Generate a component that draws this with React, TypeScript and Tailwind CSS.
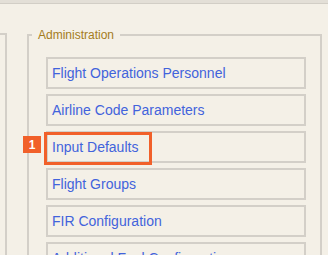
const ITEMS = [
  'Flight Operations Personnel',
  'Airline Code Parameters',
  'Input Defaults',
  'Flight Groups',
  'FIR Configuration',
  'Additional Fuel Configuration',
];

export default function App() {
  return <div className="h-[255px] w-[328px] overflow-hidden bg-[#f4f0e7] font-['Liberation_Sans',Arial,sans-serif]">
    <div className="h-[4px] border-b border-[#d2cec6] bg-[#e3dfd7]" />
    <div className="mt-[22px] flex items-start">
      <div className="mt-[7px] h-[240px] w-[7px] border-r-2 border-t-2 border-[#d3cfc8]" />
      <fieldset className="ml-[20px] w-[295px] border-2 border-[#d3cfc8] pb-4 pl-[17px] pr-[14px] pt-[13px]">
        <legend className="-ml-[14px] px-[6px] text-[12px] text-[#a47c1c]">Administration</legend>
        <ul className="flex flex-col gap-[5px]">
          {ITEMS.map((item, index) => <li key={item} className="relative flex h-[32px] items-center border-2 border-[#d3cfc8] pl-[4px] text-[14px] text-[#4263dc]">
            {item}
            {index === 2 && <>
              <span className="absolute -left-[4px] -top-[1px] h-[33px] w-[108px] border-[3px] border-[#f1602a]" />
              <span className="absolute -left-[25px] top-[3px] flex h-[17px] w-[18px] items-center justify-center bg-[#f1602a] text-[12px] font-bold text-white">1</span>
            </>}
          </li>)}
        </ul>
      </fieldset>
    </div>
  </div>;
}
